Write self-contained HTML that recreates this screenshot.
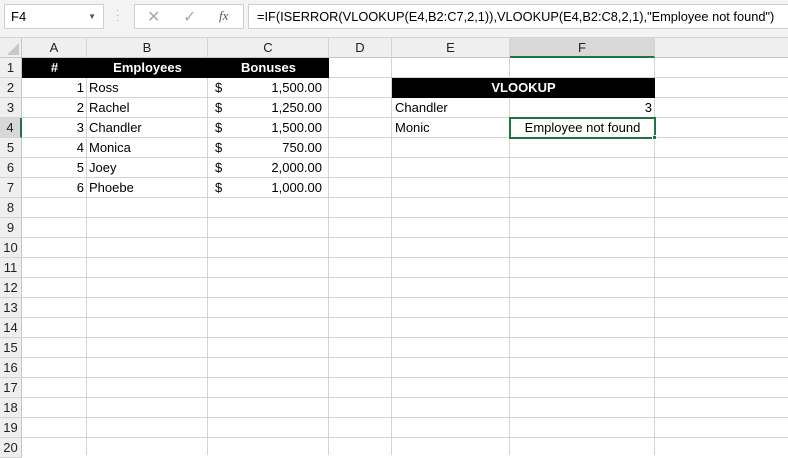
<!DOCTYPE html>
<html><head><meta charset="utf-8"><style>
*{margin:0;padding:0;box-sizing:border-box}
body{width:788px;height:455px;overflow:hidden;background:#fff;font-family:"Liberation Sans",Calibri,sans-serif;font-size:13px;color:#000;position:relative}
.a{position:absolute}
.top{left:0;top:0;width:788px;height:38px;background:#f3f3f3;border-bottom:1px solid #d4d4d4}
.box{background:#fff;border:1px solid #d0d0d0}
.ch{background:#efefef;top:38px;height:20px;border-right:1px solid #d4d4d4;border-bottom:1px solid #c6c6c6;text-align:center;line-height:19px;color:#222}
.rh{background:#efefef;left:0;width:22px;height:20px;border-bottom:1px solid #d4d4d4;border-right:1px solid #c6c6c6;text-align:center;line-height:20px;color:#222}
.vl{top:58px;height:397px;width:1px;background:#d4d4d4}
.hl{left:22px;width:766px;height:1px;background:#d4d4d4}
.t{height:20px;line-height:20px;white-space:nowrap}
.r{text-align:right}
.blk{background:#000;color:#fff;font-weight:bold;text-align:center;height:20px;line-height:20px}
</style></head><body>
<div class="a top"></div>
<div class="a box" style="left:4px;top:4px;width:100px;height:25px;line-height:23px;padding-left:6px">F4<span class="a" style="right:7px;top:0;font-size:8px;color:#555">▼</span></div>
<div class="a" style="left:116px;top:8px;color:#aaa;font-size:10px;line-height:5px">·<br>·<br>·</div>
<div class="a box" style="left:134px;top:4px;width:110px;height:25px;color:#aaa">
<span class="a" style="left:12px;top:2px;font-size:16px">✕</span><span class="a" style="left:48px;top:2px;font-size:16px">✓</span><span class="a" style="left:84px;top:3px;font-style:italic;font-family:'Liberation Serif',serif;color:#555">fx</span></div>
<div class="a box" style="left:248px;top:4px;width:545px;height:25px;line-height:23px;padding-left:8px;font-size:12.8px;white-space:nowrap;overflow:hidden">=IF(ISERROR(VLOOKUP(E4,B2:C7,2,1)),VLOOKUP(E4,B2:C8,2,1),"Employee not found")</div>

<div class="a" style="left:0;top:38px;width:22px;height:20px;background:#efefef;border-right:1px solid #c6c6c6;border-bottom:1px solid #c6c6c6"></div>
<div class="a" style="left:7px;top:43px;width:0;height:0;border-left:12px solid transparent;border-bottom:12px solid #c8c8c8"></div>
<div class="a ch" style="left:22px;width:65px">A</div>
<div class="a ch" style="left:87px;width:121px">B</div>
<div class="a ch" style="left:208px;width:121px">C</div>
<div class="a ch" style="left:329px;width:63px">D</div>
<div class="a ch" style="left:392px;width:118px">E</div>
<div class="a ch" style="left:510px;width:145px;background:#d8d8d8;border-bottom:2px solid #217346">F</div>
<div class="a ch" style="left:655px;width:133px;border-right:none"></div>

<div class="a vl" style="left:86px"></div><div class="a vl" style="left:207px"></div><div class="a vl" style="left:328px"></div><div class="a vl" style="left:391px"></div><div class="a vl" style="left:509px"></div><div class="a vl" style="left:654px"></div>
<div class="a hl" style="top:77px"></div><div class="a hl" style="top:97px"></div><div class="a hl" style="top:117px"></div><div class="a hl" style="top:137px"></div><div class="a hl" style="top:157px"></div><div class="a hl" style="top:177px"></div><div class="a hl" style="top:197px"></div><div class="a hl" style="top:217px"></div><div class="a hl" style="top:237px"></div><div class="a hl" style="top:257px"></div><div class="a hl" style="top:277px"></div><div class="a hl" style="top:297px"></div><div class="a hl" style="top:317px"></div><div class="a hl" style="top:337px"></div><div class="a hl" style="top:357px"></div><div class="a hl" style="top:377px"></div><div class="a hl" style="top:397px"></div><div class="a hl" style="top:417px"></div><div class="a hl" style="top:437px"></div>

<div class="a rh" style="top:58px">1</div><div class="a rh" style="top:78px">2</div><div class="a rh" style="top:98px">3</div><div class="a rh" style="top:118px;background:#d8d8d8;border-right:2px solid #217346">4</div><div class="a rh" style="top:138px">5</div><div class="a rh" style="top:158px">6</div><div class="a rh" style="top:178px">7</div><div class="a rh" style="top:198px">8</div><div class="a rh" style="top:218px">9</div><div class="a rh" style="top:238px">10</div><div class="a rh" style="top:258px">11</div><div class="a rh" style="top:278px">12</div><div class="a rh" style="top:298px">13</div><div class="a rh" style="top:318px">14</div><div class="a rh" style="top:338px">15</div><div class="a rh" style="top:358px">16</div><div class="a rh" style="top:378px">17</div><div class="a rh" style="top:398px">18</div><div class="a rh" style="top:418px">19</div><div class="a rh" style="top:438px">20</div>

<div class="a blk" style="left:22px;top:58px;width:307px"></div>
<div class="a t" style="left:22px;top:58px;width:65px;text-align:center;color:#fff;font-weight:bold">#</div>
<div class="a t" style="left:87px;top:58px;width:121px;text-align:center;color:#fff;font-weight:bold">Employees</div>
<div class="a t" style="left:208px;top:58px;width:121px;text-align:center;color:#fff;font-weight:bold">Bonuses</div>

<div class="a t r" style="left:22px;top:78px;width:62px">1</div><div class="a t" style="left:89px;top:78px">Ross</div><div class="a t" style="left:215px;top:78px">$</div><div class="a t r" style="left:208px;top:78px;width:114px">1,500.00</div>
<div class="a t r" style="left:22px;top:98px;width:62px">2</div><div class="a t" style="left:89px;top:98px">Rachel</div><div class="a t" style="left:215px;top:98px">$</div><div class="a t r" style="left:208px;top:98px;width:114px">1,250.00</div>
<div class="a t r" style="left:22px;top:118px;width:62px">3</div><div class="a t" style="left:89px;top:118px">Chandler</div><div class="a t" style="left:215px;top:118px">$</div><div class="a t r" style="left:208px;top:118px;width:114px">1,500.00</div>
<div class="a t r" style="left:22px;top:138px;width:62px">4</div><div class="a t" style="left:89px;top:138px">Monica</div><div class="a t" style="left:215px;top:138px">$</div><div class="a t r" style="left:208px;top:138px;width:114px">750.00</div>
<div class="a t r" style="left:22px;top:158px;width:62px">5</div><div class="a t" style="left:89px;top:158px">Joey</div><div class="a t" style="left:215px;top:158px">$</div><div class="a t r" style="left:208px;top:158px;width:114px">2,000.00</div>
<div class="a t r" style="left:22px;top:178px;width:62px">6</div><div class="a t" style="left:89px;top:178px">Phoebe</div><div class="a t" style="left:215px;top:178px">$</div><div class="a t r" style="left:208px;top:178px;width:114px">1,000.00</div>

<div class="a blk" style="left:392px;top:78px;width:263px">VLOOKUP</div>
<div class="a t" style="left:395px;top:98px">Chandler</div><div class="a t r" style="left:510px;top:98px;width:142px">3</div>
<div class="a t" style="left:395px;top:118px">Monic</div>
<div class="a" style="left:509px;top:117px;width:147px;height:22px;border:2px solid #217346"></div>
<div class="a t" style="left:510px;top:118px;width:145px;text-align:center">Employee not found</div>
<div class="a" style="left:652px;top:135px;width:5px;height:5px;background:#217346;border:1px solid #fff"></div>
</body></html>
